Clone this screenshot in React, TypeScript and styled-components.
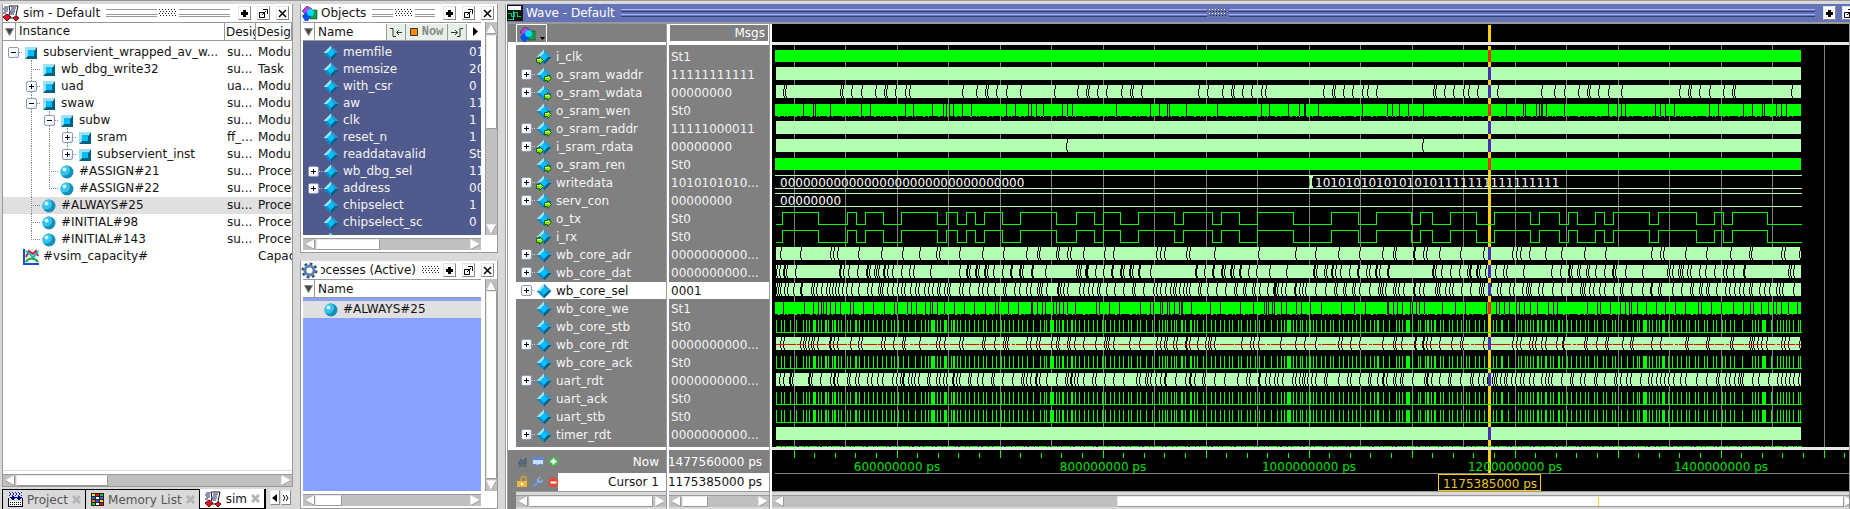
import React from "react";
import styled, { createGlobalStyle, css } from "styled-components";

const GlobalStyle = createGlobalStyle`
  * { box-sizing: border-box; }
  body { margin: 0; background: #d9d9d9; overflow: hidden; }
  body, button { font: 12px/16px "DejaVu Sans", sans-serif; color: #141414; }
  button { margin: 0; padding: 0; border: 0; background: none; }
  ul { list-style: none; margin: 0; padding: 0; }
  svg { display: block; flex: none; }
`;

/* ---------- shell ---------- */

const Window = styled.main`
  display: flex;
  gap: 7px;
  min-height: 100vh;
  padding: 3px 0 0 2px;
  border-top: 1px solid #999;
  background: #d9d9d9;
`;

const SideColumn = styled.div<{ $width: number }>`
  display: flex;
  flex-direction: column;
  flex: none;
  width: ${(p) => p.$width}px;
`;

const Panel = styled.section<{ $grow?: boolean; $height?: number }>`
  display: flex;
  flex-direction: column;
  flex: ${(p) => (p.$grow ? "1" : "none")};
  ${(p) => p.$height && css`height: ${p.$height}px;`}
  min-height: 0;
  overflow: hidden;
  background: #fff;
  border: 1px solid #999;
  border-top: 0;
`;

const TitleBar = styled.header<{ $dark?: boolean }>`
  display: flex;
  align-items: center;
  flex: none;
  gap: 4px;
  height: 18px;
  padding-right: ${(p) => (p.$dark ? 0 : 3)}px;
  margin-right: ${(p) => (p.$dark ? -5 : 0)}px;
  background: ${(p) => (p.$dark ? "#6473b5" : "#fff")};
  color: ${(p) => (p.$dark ? "#fff" : "#141414")};
`;

const Title = styled.h2<{ $clip?: boolean }>`
  margin: 0 0 0 -1px;
  font: inherit;
  white-space: nowrap;
  ${(p) =>
    p.$clip &&
    css`
      display: flex;
      justify-content: flex-end;
      width: 95px;
      overflow: hidden;
    `}
`;

const Grip = styled.div`
  display: flex;
  align-items: center;
  flex: 1;
  gap: 2px;
  min-width: 0;
  margin: 0 2px;
`;

const GripLines = styled.i<{ $dark?: boolean }>`
  flex: 1;
  height: 8px;
  border: solid ${(p) => (p.$dark ? "#a5b3ff" : "#999")};
  border-width: 1px 0;
  background: linear-gradient(
    transparent 4px,
    ${(p) => (p.$dark ? "#a5b3ff" : "#999")} 4px,
    ${(p) => (p.$dark ? "#a5b3ff" : "#999")} 5px,
    transparent 5px
  );
  ${(p) =>
    p.$dark &&
    css`
      border-bottom-color: #333f70;
      background: linear-gradient(transparent 1px, #333f70 1px, #333f70 2px, transparent 2px, transparent 4px, #a5b3ff 4px, #a5b3ff 5px, transparent 5px);
    `}
`;

const ToolButton = styled.button`
  display: grid;
  place-items: center;
  flex: none;
  width: 13px;
  height: 14px;
  margin-left: 2px;
  background: #fff;
  border: 1px solid #e4e4e4;
  border-right-color: #888;
  border-bottom-color: #888;
`;

function GripDots({ dark }: { dark?: boolean }) {
  const dots = [];
  for (let r = 0; r < 4; r++)
    for (let c = 0; c < 6; c++)
      dots.push(<rect key={`${r}-${c}`} x={c * 3 + (r % 2)} y={r * 2} width="1" height="1" fill={dark && r % 2 === 0 ? "#fff" : "#222"} />);
  return <svg width="18" height="8" shapeRendering="crispEdges">{dots}</svg>;
}

function TitleControls({ dark }: { dark?: boolean }) {
  return (
    <>
      <ToolButton aria-label="Zoom">
        <svg width="9" height="9" shapeRendering="crispEdges"><path d="M1 3h2V1h3v2h2v3H6v2H3V6H1z" fill="#000" /></svg>
      </ToolButton>
      <ToolButton aria-label="Undock">
        <svg width="9" height="9" fill="none" stroke="#000"><path d="M.5 3.500h5v5h-5zM3 6l4-4M4 .5h4.500V5" /></svg>
      </ToolButton>
      {!dark && (
        <ToolButton aria-label="Close">
          <svg width="9" height="9" stroke="#000" strokeWidth="1.500"><path d="M1 1l7 7M8 1L1 8" /></svg>
        </ToolButton>
      )}
    </>
  );
}

/* ---------- scroll bars ---------- */

const Track = styled.div<{ $vertical?: boolean; $parts: [number, number, number] }>`
  display: grid;
  flex: none;
  ${(p) => (p.$vertical ? "grid-template-rows" : "grid-template-columns")}:
    12px ${(p) => p.$parts.map((n) => `${n}fr`).join(" ")} 12px;
  ${(p) => (p.$vertical ? "width" : "height")}: 12px;
  background: #c0c0c0;
  border: 0 solid #999;
  ${(p) => (p.$vertical ? "border-left-width" : "border-top-width")}: 1px;
`;

const Thumb = styled.i`
  background: #fff;
  border: 1px solid #e8e8e8;
  border-right-color: #999;
  border-bottom-color: #999;
`;

const Arrow = styled.button`
  display: grid;
  place-items: center;
  overflow: hidden;
`;

const arrowPaths = {
  left: ["M10.500.5L1 5.500 10.500 10.500z", "M1 5.500L10.500 10.500V.5"],
  right: ["M.5.5L10 5.500.5 10.500z", "M.5 10.500L10 5.500"],
  up: ["M5.500 1L10.500 10.500H.5z", "M5.500 1L10.500 10.500H.5"],
  down: ["M.5.5h10L5.500 10z", "M10.500.5L5.500 10"],
};

function ArrowIcon({ dir }: { dir: keyof typeof arrowPaths }) {
  const [body, shade] = arrowPaths[dir];
  return (
    <svg width="11" height="11">
      <path d={body} fill="#fff" stroke="#e8e8e8" />
      <path d={shade} fill="none" stroke="#999" />
    </svg>
  );
}

function ScrollBar({ vertical, parts }: { vertical?: boolean; parts: [number, number, number] }) {
  return (
    <Track $vertical={vertical} $parts={parts}>
      <Arrow aria-label="Scroll back"><ArrowIcon dir={vertical ? "up" : "left"} /></Arrow>
      <span />
      <Thumb />
      <span />
      <Arrow aria-label="Scroll forward"><ArrowIcon dir={vertical ? "down" : "right"} /></Arrow>
    </Track>
  );
}

/* ---------- icons ---------- */

const CubeIcon = () => (
  <svg width="12" height="12">
    <path d="M0 0h12L8 4H3v5L0 12z" fill="#9fe0f7" />
    <path d="M12 0v12H0l3-3h6V4z" fill="#006080" />
    <path d="M3 3h6v6H3z" fill="#00bfff" />
  </svg>
);

const BallIcon = () => (
  <svg width="14" height="14">
    <circle cx="7" cy="7" r="6.500" fill="#1590b8" />
    <path d="M7 .5A6.500 6.500 0 0 0 1.500 10.500C4 11 10 10 10 5 10 3 9 1 7 .5z" fill="#35c4ee" />
    <circle cx="4.500" cy="4.500" r="2" fill="#d8f6ff" />
  </svg>
);

const GraphIcon = () => (
  <svg width="16" height="16" fill="none">
    <path d="M1 0v15h15" stroke="#1550c8" strokeWidth="2" />
    <path d="M2 0h14v14H2z" fill="#dff6fb" />
    <path d="M3 8l3-6 4 3 3-3 2 5" stroke="#e02020" strokeWidth="2" />
    <path d="M3 2l5 4 2 3 5-7" stroke="#10b8d8" strokeWidth="2" />
    <path d="M3 13c2-4 8-5 12 0" stroke="#30a030" strokeWidth="2" />
  </svg>
);

type Port = "in" | "out" | undefined;
const Diamond = ({ port }: { port?: Port }) => (
  <svg width="17" height="16">
    <path d="M8 .5L.5 8H5l3-3z" fill="#9ae4fa" />
    <path d="M8 .5L15.500 8H11L8 5z" fill="#2b9ad0" />
    <path d="M.5 8L8 15.500V11L5 8z" fill="#1488c4" />
    <path d="M15.500 8L8 15.500V11l3-3z" fill="#005f86" />
    <path d="M8 4L12 8 8 12 4 8z" fill="#00c0ff" />
    {port && (
      <path
        d="M.5 9.500h3V7.500l4 4-4 4v-2h-3z"
        transform={port === "out" ? "translate(8 0)" : undefined}
        fill="#86ea00"
        stroke="#17641c"
      />
    )}
    {port && <path d={port === "in" ? "M1 10.500h4" : "M9 10.500h4"} stroke="#f4ffb0" />}
  </svg>
);

const SimIcon = () => (
  <svg width="17" height="16">
    <path d="M6 1h9l-2 9 1 3H5l2-6z" fill="#fff" stroke="#111" />
    <path d="M1 2h4M0 4h5M1 6h4M0 8h3M8 3h5M8 5h4M7 7h5M7 9h4" stroke="#22226a" />
    <path d="M4 9l4 3-4 4-4-4z" fill="#e0102a" stroke="#600" />
    <path d="M13 11l3 2-3 3-3-3z" fill="#e0102a" stroke="#600" />
  </svg>
);

const ShapesIcon = () => (
  <svg width="17" height="15">
    <path d="M1 5l5-5 5 3-2 5H4z" fill="#c040e8" stroke="#202020" strokeWidth=".6" />
    <path d="M9 4h7v9h-7z" fill="#10a050" stroke="#084018" strokeWidth=".6" />
    <path d="M1 10l4-4 5 4-3 5H4z" fill="#0850e8" />
    <circle cx="9.500" cy="6.500" r="3.500" fill="#00d8f8" />
  </svg>
);

const GearIcon = () => (
  <svg width="17" height="17" viewBox="0 0 17 17" fill="none">
    <circle cx="8.500" cy="8.500" r="6.800" stroke="#2c4c74" strokeWidth="2.400" strokeDasharray="2.700 2.640" />
    <circle cx="8.500" cy="8.500" r="4.500" stroke="#5c83ad" strokeWidth="3" />
  </svg>
);

const WaveIcon = () => (
  <svg width="16" height="16" shapeRendering="crispEdges">
    <path d="M0 0h16v16H0z" fill="#111" />
    <path d="M1 1h13v4H1z" fill="#fff" />
    <path d="M1 8h3v3h3V7h3v4h4M1 14h5v-3" stroke="#00d040" fill="none" />
    <path d="M6 6v9" stroke="#00d0e0" />
  </svg>
);

/* ---------- column headings ---------- */

const HeadCell = styled.th`
  height: 18px;
  padding: 0 0 0 1px;
  overflow: hidden;
  font-weight: normal;
  text-align: left;
  white-space: nowrap;
  border-right: 1px solid #999;
  border-bottom: 1px solid #999;
`;

const HeadRow = styled.div`
  display: flex;
  align-items: center;
  flex: none;
  height: 19px;
  border-top: 1px solid #999;
  border-bottom: 1px solid #999;
`;

const FilterButton = styled.button`
  display: inline-grid;
  place-items: center;
  width: 12px;
  height: 17px;
  margin-right: 3px;
  vertical-align: top;
  border-right: 1px solid #999;
`;

const Filter = () => (
  <FilterButton aria-label="Column filter">
    <svg width="9" height="8"><path d="M.5.5h8l-4 7z" fill="#444" stroke="#888" /></svg>
  </FilterButton>
);

/* ---------- instance tree ---------- */

const TreeArea = styled.div`
  flex: 1;
  border-top: 1px solid #999;
  border-bottom: 1px solid #ddd;
  margin-bottom: 3px;
`;

const TreeTable = styled.table`
  width: 100%;
  table-layout: fixed;
  border-collapse: separate;
  border-spacing: 0;
  thead + tbody::before { content: ""; display: block; height: 3px; }
`;

const TreeRow = styled.tr<{ $selected?: boolean }>`
  background: ${(p) => (p.$selected ? "#e0e0e0" : "transparent")};
  td { height: 17px; padding: 0 0 0 2px; overflow: hidden; white-space: nowrap; line-height: 17px; }
  td:first-child { padding: 0; }
`;

const Node = styled.div`
  display: flex;
  align-items: center;
  height: 17px;
  padding-left: 1px;
`;

const Slot = styled.span`
  display: grid;
  place-items: center;
  flex: none;
  width: 18px;
  height: 17px;
  > * { grid-area: 1 / 1; }
`;

const NodeLabel = styled.span`
  margin-left: 3px;
`;

const Toggle = styled.button`
  display: grid;
  place-items: center;
  width: 11px;
  height: 11px;
  background: linear-gradient(135deg, #fff 50%, #dde2f0);
  border: 1px solid #8c9ab8;
  border-radius: 2px;
`;

const ToggleMark = ({ open }: { open?: boolean }) => (
  <svg width="7" height="7" shapeRendering="crispEdges">
    <path d={open ? "M1 3h5v1H1z" : "M1 3h5v1H1zM3 1h1v5H3z"} fill="#000" />
  </svg>
);

type Guide = { up?: boolean; down?: boolean; right?: boolean; light?: boolean };
function GuideLines({ up, down, right, light }: Guide) {
  return (
    <svg width="18" height="17" stroke={light ? "#d0d0d0" : "#888"} strokeDasharray="1 1" shapeRendering="crispEdges">
      {up && <path d="M9.500 0v9" />}
      {down && <path d="M9.500 8v9" />}
      {right && <path d="M9 8.500h9" />}
    </svg>
  );
}

type Inst = {
  name: string; unit: string; kind: string; icon: "cube" | "ball" | "graph";
  level: number; rails?: number[]; toggle?: "open" | "closed"; last?: boolean; selected?: boolean;
};

const instances: Inst[] = [
  { name: "subservient_wrapped_av_w...", unit: "su...", kind: "Module", icon: "cube", level: 0, toggle: "open" },
  { name: "wb_dbg_write32", unit: "su...", kind: "Task", icon: "cube", level: 1 },
  { name: "uad", unit: "ua...", kind: "Module", icon: "cube", level: 1, toggle: "closed" },
  { name: "swaw", unit: "su...", kind: "Module", icon: "cube", level: 1, toggle: "open" },
  { name: "subw", unit: "su...", kind: "Module", icon: "cube", level: 2, rails: [1], toggle: "open" },
  { name: "sram", unit: "ff_...", kind: "Module", icon: "cube", level: 3, rails: [1, 2], toggle: "closed" },
  { name: "subservient_inst", unit: "su...", kind: "Module", icon: "cube", level: 3, rails: [1, 2], toggle: "closed", last: true },
  { name: "#ASSIGN#21", unit: "su...", kind: "Process", icon: "ball", level: 2, rails: [1] },
  { name: "#ASSIGN#22", unit: "su...", kind: "Process", icon: "ball", level: 2, rails: [1], last: true },
  { name: "#ALWAYS#25", unit: "su...", kind: "Process", icon: "ball", level: 1, selected: true },
  { name: "#INITIAL#98", unit: "su...", kind: "Process", icon: "ball", level: 1 },
  { name: "#INITIAL#143", unit: "su...", kind: "Process", icon: "ball", level: 1, last: true },
  { name: "#vsim_capacity#", unit: "", kind: "Capacity", icon: "graph", level: 0 },
];

const instanceIcons = { cube: <CubeIcon />, ball: <BallIcon />, graph: <GraphIcon /> };

function InstanceRow({ item }: { item: Inst }) {
  const { level, rails = [], toggle, last, icon } = item;
  return (
    <TreeRow $selected={item.selected}>
      <td>
        <Node>
          {Array.from({ length: level }, (_, i) => (
            <Slot key={i}>{rails.includes(i) && <GuideLines up down />}</Slot>
          ))}
          <Slot>
            <GuideLines up={level > 0} down={level > 0 && !last} right={icon !== "graph"} />
            {toggle && <Toggle aria-label={`Toggle ${item.name}`}><ToggleMark open={toggle === "open"} /></Toggle>}
          </Slot>
          <Slot>
            <GuideLines down={toggle === "open"} />
            {instanceIcons[icon]}
          </Slot>
          <NodeLabel>{item.name}</NodeLabel>
        </Node>
      </td>
      <td>{item.unit}</td>
      <td>{item.kind}</td>
    </TreeRow>
  );
}

/* ---------- tabs ---------- */

const TabStrip = styled.nav`
  display: flex;
  flex: none;
  height: 20px;
  margin-top: 2px;
`;

const Tab = styled.button<{ $active?: boolean }>`
  display: flex;
  align-items: center;
  gap: 4px;
  padding: 0 4px 0 5px;
  white-space: nowrap;
  background: ${(p) => (p.$active ? "#fff" : "#d9d9d9")};
  color: ${(p) => (p.$active ? "#141414" : "#555")};
  border: solid #000;
  border-width: ${(p) => (p.$active ? "0 2px 1px 1px" : "1px 0 0 1px")};
`;

const TabNavs = styled.div`
  display: flex;
  gap: 1px;
  padding: 1px 0 0 4px;
`;

const TabNav = styled.button`
  display: grid;
  place-items: center;
  width: 10px;
  height: 15px;
  background: #fff;
  border: 1px solid #eee;
  border-right-color: #888;
  border-bottom-color: #888;
`;

const CloseMark = () => (
  <svg width="9" height="9" stroke="#b4b4b4" strokeWidth="3"><path d="M1 1l7 7M8 1L1 8" /></svg>
);

const ProjectIcon = () => (
  <svg width="15" height="15" shapeRendering="crispEdges">
    <path d="M1 .5h13M2 2.500h11" stroke="#2020a0" strokeDasharray="1 2" />
    <path d="M2 1.500h12M1 3.500h13" stroke="#2020a0" strokeDasharray="1 2" />
    <path d="M4 4h2v1h2L5 9 1 5h3zM10 4h2v1h2l-3 4-4-4h3z" fill="#000090" />
    <path d="M.5 6v8.500h14V6" fill="none" stroke="#000" />
    <path d="M1 9h13v5H1z" fill="#fff" />
    <path d="M2 10.500h12M2 12.500h12" stroke="#000" strokeDasharray="1 1" />
  </svg>
);

const MemoryIcon = () => {
  const colors = ["#ffe000", "#f01010", "#20c020", "#3060f0", "#fff", "#3060f0", "#ff8000", "#3060f0", "#ffe000", "#20c020", "#fff", "#f01010"];
  return (
    <svg width="13" height="13" shapeRendering="crispEdges">
      <path d="M0 0h13v13H0z" fill="#222" />
      {colors.map((c, i) => <rect key={i} x={1 + (i % 3) * 4} y={1 + Math.floor(i / 3) * 3} width="3" height="2" fill={c} />)}
    </svg>
  );
};

function SimPanel() {
  return (
    <SideColumn $width={291}>
      <Panel $grow>
        <TitleBar>
          <SimIcon />
          <Title>sim - Default</Title>
          <Grip><GripLines /><GripDots /><GripLines /></Grip>
          <TitleControls />
        </TitleBar>
        <TreeArea>
          <TreeTable>
            <colgroup><col /><col style={{ width: 31 }} /><col style={{ width: 36 }} /></colgroup>
            <thead>
              <tr>
                <HeadCell scope="col"><Filter />Instance</HeadCell>
                <HeadCell scope="col">Desig</HeadCell>
                <HeadCell scope="col">Desig</HeadCell>
              </tr>
            </thead>
            <tbody>{instances.map((it) => <InstanceRow key={it.name} item={it} />)}</tbody>
          </TreeTable>
        </TreeArea>
        <ScrollBar parts={[1, 92, 172]} />
      </Panel>
      <TabStrip>
        <Tab><ProjectIcon />Project<CloseMark /></Tab>
        <Tab><MemoryIcon />Memory List<CloseMark /></Tab>
        <Tab $active><SimIcon />sim<CloseMark /></Tab>
        <TabNavs>
          <TabNav aria-label="Previous tab"><svg width="5" height="8"><path d="M5 0v8L0 4z" /></svg></TabNav>
          <TabNav aria-label="Next tab"><svg width="6" height="8" fill="none" stroke="#000"><path d="M0 1l2 3-2 3M3 1l2 3-2 3" /></svg></TabNav>
        </TabNavs>
      </TabStrip>
    </SideColumn>
  );
}

/* ---------- objects and processes ---------- */

const ListBody = styled.div`
  display: flex;
  flex: 1;
  gap: 4px;
  min-height: 0;
  padding-left: 2px;
`;

const ListMain = styled.div`
  display: flex;
  flex-direction: column;
  flex: 1;
  min-width: 0;
`;

const ListFooter = styled.div`
  flex: none;
  padding: 3px 16px 2px 2px;
`;

const ListTable = styled.table<{ $tone: string; $color: string }>`
  display: block;
  flex: 1;
  min-height: 0;
  overflow: hidden;
  border-spacing: 0;
  padding-top: 3px;
  background: ${(p) => p.$tone};
  color: ${(p) => p.$color};
  tr { height: 17px; }
  td { padding: 0; white-space: nowrap; line-height: 17px; }
  td:first-child { min-width: 166px; }
`;

const ListNode = styled.div`
  display: flex;
  align-items: center;
  height: 17px;
  padding-left: 1px;
`;

const SelectedRow = styled.tr`
  background: #e0e0e0;
`;

const TimeTools = styled.div`
  display: flex;
  gap: 1px;
  margin-left: auto;
  height: 16px;
  background: #999;
  border: solid #999;
  border-width: 0 1px;
`;

const TimeButton = styled.button<{ $width: number }>`
  display: flex;
  align-items: center;
  justify-content: center;
  gap: 4px;
  width: ${(p) => p.$width}px;
  background: #e6f0e6;
  color: #888;
  font: bold 12px/16px "Liberation Mono", monospace;
`;

const MoreButton = styled.button`
  width: 13px;
  margin-left: 1px;
  display: grid;
  place-items: center end;
  padding-right: 3px;
`;

const objects: [string, string, boolean?][] = [
  ["memfile", "01"], ["memsize", "20"], ["with_csr", "0"], ["aw", "11"], ["clk", "1"], ["reset_n", "1"],
  ["readdatavalid", "St"], ["wb_dbg_sel", "11", true], ["address", "00", true], ["chipselect", "1"], ["chipselect_sc", "0"],
];

function ObjectsPanel() {
  return (
    <Panel $height={249}>
      <TitleBar>
        <ShapesIcon />
        <Title>Objects</Title>
        <Grip><GripLines /><GripDots /><GripLines /></Grip>
        <TitleControls />
      </TitleBar>
      <ListBody>
        <ListMain>
          <HeadRow>
            <Filter />Name
            <TimeTools>
              <TimeButton $width={18} aria-label="Previous event">
                <svg width="13" height="10" fill="none" stroke="#333"><path d="M0 1.500h3v8h3M12 5.500H7M9 3L6.500 5.500 9 8" /></svg>
              </TimeButton>
              <TimeButton $width={41}>
                <svg width="8" height="8"><path d="M.5.5h7v7h-7z" fill="#ff8c00" stroke="#333" /></svg>
                Now
              </TimeButton>
              <TimeButton $width={18} aria-label="Next event">
                <svg width="13" height="10" fill="none" stroke="#333"><path d="M12 1.500H9v8H6M0 5.500h6M4 3l2.500 2.500L4 8" /></svg>
              </TimeButton>
            </TimeTools>
            <MoreButton aria-label="More"><svg width="5" height="9"><path d="M0 0v9l5-4.500z" /></svg></MoreButton>
          </HeadRow>
          <ListTable $tone="#505a8c" $color="#f4f4f4">
            <tbody>
              {objects.map(([name, value, bus]) => (
                <tr key={name}>
                  <td>
                    <ListNode>
                      <Slot>
                        {bus && <GuideLines right light />}
                        {bus && <Toggle aria-label={`Expand ${name}`}><ToggleMark /></Toggle>}
                      </Slot>
                      <Slot><Diamond /></Slot>
                      <NodeLabel>{name}</NodeLabel>
                    </ListNode>
                  </td>
                  <td>{value}</td>
                </tr>
              ))}
              <tr><td><ListNode><Slot /><Slot><Diamond /></Slot></ListNode></td></tr>
            </tbody>
          </ListTable>
        </ListMain>
        <ScrollBar vertical parts={[1, 94, 94]} />
      </ListBody>
      <ListFooter><ScrollBar parts={[1, 64, 88]} /></ListFooter>
    </Panel>
  );
}

const ProcessTable = styled(ListTable)`
  tbody { display: block; }
  tr { display: block; }
  td { display: block; }
`;

function ProcessesPanel() {
  return (
    <Panel $grow>
      <TitleBar>
        <GearIcon />
        <Title $clip><span>Processes (Active)</span></Title>
        <Grip><GripDots /></Grip>
        <TitleControls />
      </TitleBar>
      <ListBody>
        <ListMain>
          <HeadRow><Filter />Name</HeadRow>
          <ProcessTable $tone="#8aa2ff" $color="#141414">
            <tbody>
              <SelectedRow>
                <td>
                  <ListNode>
                    <Slot /><Slot><BallIcon /></Slot><NodeLabel>#ALWAYS#25</NodeLabel>
                  </ListNode>
                </td>
              </SelectedRow>
            </tbody>
          </ProcessTable>
        </ListMain>
        <ScrollBar vertical parts={[0, 1, 0]} />
      </ListBody>
      <ListFooter><ScrollBar parts={[0, 27, 126]} /></ListFooter>
    </Panel>
  );
}

/* ---------- wave data ---------- */

const nums = (s: string) => s.trim().split(/\s+/).map(Number);

const WDATA = nums(`11 13 68 70 79 89 103 112 114 123 133 137 190 204 213 215 224 234 248 282 305 314 316 325 334 349 358 360 369
 426 435 450 459 461 470 479 489 493 551 560 562 571 580 590 595 604 661 663 672 681 691 696 705 717 725 769 782 792 806 815 817 826 836 849
 907 916 918 927 937 951 960 962 1019`);
const WEN = nums(`31 41 43 58 89 98 133 141 160 171 174 177 181 190 199 234 243 256 259 264 271 290 295 300 344 378 387 395 397 414 445
 489 497 516 527 532 533 546 590 615 620 627 636 651 734 751 753 764 767 769 770 774 792 836 845 849 853 883 888 893 902 937 946 971 980 990 992
 1004 1009 1014`);
const RDATA = [294, 650];
const UART = nums(`10 46 75 84 93 111 129 165 174 185 194 203 212 230 248 284 304 322 331 348 366 402 411 440 449 467 485 521 559 586
 604 639 648 660 678 704 722 758 767 787 796 805 823 832 841 877 886 924 942 951 960 995`);
const ADR = nums(`8 28 58 61 65 86 109 130 147 164 167 187 210 231 254 265 267 284 286 295 298 311 332 341 384 388 392 414 417 442 486
 523 543 566 587 610 621 623 641 642 651 654 667 688 711 740 744 748 757 773 789 812 833 879 888 891 913 934 958 977 979 1009 1012 1027`);
const DAT = nums(`4 7 11 12 14 23 67 68 71 76 85 94 95 97 102 104 106 111 112 115 120 129 137 141 158 187 194 195 197 203 204 206 212 213
 215 221 230 238 239 247 248 250 259 260 273 304 306 308 313 314 315 323 331 339 340 348 349 351 357 358 360 366 367 378 423 424 432 440 441 449 450
 452 458 459 461 467 468 476 484 497 514 541 542 544 552 554 559 560 563 568 577 585 586 594 597 603 604 607 615 616 660 661 663 669 678 687 695 697
 698 704 705 707 713 723 731 734 751 779 788 796 797 799 805 807 814 816 823 832 840 841 843 853 870 895 897 900 906 908 910 915 918 927 933 942 951
 954 961 971 972 1016 1018 1021`);
const SEL = nums(`4 6 8 12 15 21 28 29 39 41 44 49 54 57 60 63 66 70 74 79 86 95 99 106 108 110 115 120 125 129 132 138 143 146 152 156 160
 165 167 172 175 177 187 190 197 206 210 215 222 231 233 242 247 254 258 265 267 269 274 285 286 288 291 295 307 311 316 320 325 327 334 342 351 360
 362 371 381 384 388 393 398 401 403 407 411 414 417 426 428 435 444 453 462 464 471 473 480 482 487 495 501 502 503 505 509 513 522 523 527 530 533
 543 553 562 564 571 573 580 582 587 597 606 608 610 613 621 623 626 631 641 642 647 651 663 665 667 673 677 680 689 698 707 709 711 718 725 728 737
 741 750 754 756 758 766 770 780 789 799 808 810 812 817 821 827 832 841 848 850 859 870 878 879 886 888 900 909 918 920 927 929 934 936 944 953 957
 962 967 971 977 979 987 992 997 1004 1007 1010 1021`);
const WE = nums(`11 32 41 46 49 51 54 58 63 68 78 81 91 101 112 122 125 135 139 144 153 158 160 165 172 182 192 202 213 223 226 236 246 259
 260 265 270 273 281 284 287 291 295 303 324 327 337 347 368 378 381 388 390 395 397 402 407 409 410 419 438 448 468 481 492 494 496 500 502 509 514
 524 529 538 549 569 582 593 615 616 621 625 630 638 640 644 647 652 670 683 693 714 724 727 732 737 744 747 752 758 765 776 781 785 815 825 828 838
 848 853 857 859 865 874 884 893 903 913 926 929 939 949 961 971 978 981 989 996 1001 1004 1009 1016 1025`);
const STB = nums(`4 9 12 18 24 31 34 37 41 42 43 46 49 53 54 56 60 62 63 66 69 75 78 83 84 87 92 96 101 105 110 114 119 122 126 131 136 143 149
 153 156 159 160 161 162 165 168 172 173 174 179 181 182 185 188 193 197 202 206 211 214 220 224 229 232 237 241 246 250 255 261 268 272 274 278 279
 280 281 284 287 290 291 295 299 300 303 307 312 316 321 325 330 333 338 342 347 351 356 359 365 368 374 380 387 390 393 395 399 402 404 409 410 413
 418 419 422 425 431 434 439 443 448 452 457 460 466 469 475 478 483 487 492 499 505 509 512 515 516 517 518 521 524 528 530 534 537 538 541 544 549
 553 558 561 567 571 576 580 584 588 593 598 602 605 606 611 617 624 627 630 634 635 636 637 640 646 648 653 655 656 659 662 663 668 671 677 680 685
 689 694 697 703 707 712 721 724 729 730 736 746 749 753 755 758 761 765 766 769 773 774 778 781 786 787 790 795 799 804 808 813 816 822 825 831 834
 840 843 849 855 861 865 867 871 872 873 874 877 880 884 887 890 891 892 896 900 905 909 914 917 923 926 932 935 941 944 950 953 958 962 970 980 983
 986 990 991 992 993 999 1005 1008 1011 1014 1017 1021 1026 1028`);
const RDT = nums(`8 11 28 31 33 36 39 41 45 57 58 61 65 78 86 89 109 112 121 130 132 147 164 167 172 187 190 210 212 222 231 233 235 254 258
 264 267 279 284 286 295 297 302 311 323 332 334 336 341 357 367 384 388 392 394 401 404 413 414 417 425 433 436 438 442 469 478 481 486 508 523 532
 543 566 569 578 587 610 621 623 629 642 643 650 651 654 658 667 679 688 690 711 740 744 748 757 760 763 769 773 784 790 791 812 814 824 833 835 850
 858 860 879 888 913 915 934 936 958 960 977 979 981 985 989 994 1009 1012 1016 1027`);
const URDT = nums(`7 11 17 18 20 36 37 39 48 58 61 62 65 75 77 83 86 95 99 105 110 120 124 128 130 131 136 139 142 146 155 157 164 167 171 174
 180 181 184 187 196 198 205 210 219 221 230 240 249 251 254 258 263 264 267 274 284 293 295 298 299 302 305 311 320 323 332 341 351 364 367 373 375
 378 383 388 392 393 403 413 417 418 422 430 432 442 452 465 474 477 486 487 493 497 502 505 510 520 523 527 530 532 535 539 543 552 554 566 575 578
 587 596 598 605 610 611 614 621 623 628 630 640 652 654 655 659 667 676 678 688 698 700 706 711 715 720 722 724 728 732 734 739 743 748 751 757 761
 769 773 776 779 789 798 800 808 812 822 824 832 842 844 848 854 858 868 876 879 884 888 892 896 901 908 913 924 934 944 946 953 957 962 966 968 970
 980 986 996 1005 1009 1013 1017 1021 1026`);

type Kind = "clock" | "bus" | "text" | "line" | "pulse";
type Signal = { name: string; value: string; kind: Kind; port?: Port; expand?: boolean; at?: number[]; mid?: boolean; selected?: boolean };

const X10 = "0000000000...";
const signals: Signal[] = [
  { name: "i_clk", value: "St1", kind: "clock", port: "in" },
  { name: "o_sram_waddr", value: "11111111111", kind: "bus", port: "out", expand: true },
  { name: "o_sram_wdata", value: "00000000", kind: "bus", port: "out", expand: true, at: WDATA },
  { name: "o_sram_wen", value: "St0", kind: "clock", port: "out", at: WEN },
  { name: "o_sram_raddr", value: "11111000011", kind: "bus", port: "out", expand: true },
  { name: "i_sram_rdata", value: "00000000", kind: "bus", port: "in", expand: true, at: RDATA },
  { name: "o_sram_ren", value: "St0", kind: "clock", port: "out" },
  { name: "writedata", value: "1010101010...", kind: "text", port: "in", expand: true, at: [538] },
  { name: "serv_con", value: "00000000", kind: "text", port: "out", expand: true },
  { name: "o_tx", value: "St0", kind: "line", port: "out", at: UART },
  { name: "i_rx", value: "St0", kind: "line", port: "in", at: UART },
  { name: "wb_core_adr", value: X10, kind: "bus", expand: true, at: ADR },
  { name: "wb_core_dat", value: X10, kind: "bus", expand: true, at: DAT },
  { name: "wb_core_sel", value: "0001", kind: "bus", expand: true, at: SEL, selected: true },
  { name: "wb_core_we", value: "St1", kind: "clock", at: WE },
  { name: "wb_core_stb", value: "St0", kind: "pulse", at: STB },
  { name: "wb_core_rdt", value: X10, kind: "bus", expand: true, at: RDT, mid: true },
  { name: "wb_core_ack", value: "St0", kind: "pulse", at: STB },
  { name: "uart_rdt", value: X10, kind: "bus", expand: true, at: URDT },
  { name: "uart_ack", value: "St0", kind: "pulse", at: STB },
  { name: "uart_stb", value: "St0", kind: "pulse", at: STB },
  { name: "timer_rdt", value: X10, kind: "bus", expand: true },
];

const END = 1029;
const CURSOR = 716;
const GREEN = "#00ff00";
const PALE = "#b4ffb4";
const GOLD = "#ffd000";

const bars = (xs: number[], y: number, h: number) => xs.map((x) => `M${x} ${y}h1v${h}h-1z`).join("");
const edges = (xs: number[], y: number) =>
  xs.map((x) => `M${x + 1} ${y}h1v4h-1zM${x} ${y + 4}h1v7h-1zM${x + 1} ${y + 11}h1v2h-1z`).join("");

function linePath(xs: number[], y: number) {
  let d = `M4 ${y + 14.5}`;
  xs.forEach((x, i) => { d += `H${x + 0.5}V${y + (i % 2 ? 14.5 : 2.5)}`; });
  return `${d}H${END + 1}`;
}

function Trace({ signal, y }: { signal: Signal; y: number }) {
  const at = signal.at ?? [];
  switch (signal.kind) {
    case "clock":
      return (
        <g>
          <rect x="3" y={y + 2} width={END - 3} height="12" fill={GREEN} />
          {at.length > 0 && <path d={bars(at, y + 2, 12)} fill="#000" />}
          {at.length > 0 && <path d={`M6 ${y + 14.5}H${END}`} stroke={GREEN} strokeDasharray="2 4 1 2 1 7 2 3 1 9" />}
          <rect x={CURSOR} y={y + 2} width="3" height="12" fill="#ff2800" />
        </g>
      );
    case "bus":
      return (
        <g>
          <rect x="4" y={y + 1} width={END - 4} height="13" fill={PALE} />
          <path d={edges(at, y + 1)} fill="#000" />
          {signal.mid && <path d={`M4 ${y + 8.5}H${END}`} stroke="#ff0000" strokeDasharray="20 1 9 2 3 1 14 1" />}
          <rect x={CURSOR} y={y + 1} width="3" height="13" fill="#4b2ab4" />
        </g>
      );
    case "text":
      return (
        <g>
          <path d={`M3 ${y + 1.5}H${END + 1}M3 ${y + 14.5}H${END + 1}`} stroke={PALE} />
          {at.map((x) => <path key={x} d={`M${x - 1} ${y + 1}h4v3h-1v8h1v3h-4v-3h1v-8h-1z`} fill={PALE} />)}
        </g>
      );
    case "line":
      return <path d={linePath(at, y)} fill="none" stroke={GREEN} />;
    case "pulse":
      return (
        <g>
          <path d={bars(at, y + 2, 12)} fill={GREEN} />
          <path d={`M4 ${y + 14.5}H${END + 1}`} stroke={GREEN} />
        </g>
      );
  }
}

/* ---------- wave window ---------- */

const WaveWindow = styled.section`
  display: flex;
  flex-direction: column;
  flex: 1;
  min-width: 0;
  overflow: hidden;
  padding-left: 1px;
  border-left: 1px solid #999;
  background: #fff;
`;

const WavePanes = styled.div`
  display: grid;
  grid-template-columns: 159px 101px minmax(0, 1fr);
  column-gap: 2px;
  flex: 1;
  border-top: 2px solid #999;
  border-left: 1px solid #999;
`;

const Pane = styled.div`
  display: flex;
  flex-direction: column;
  min-width: 0;
  border-right: 1px solid #999;
`;

const PaneHead = styled.div<{ $black?: boolean }>`
  display: flex;
  flex: none;
  height: 18px;
  background: ${(p) => (p.$black ? "#000" : "#808080")};
`;

const MsgsHead = styled.div`
  flex: 1;
  padding-right: 3px;
  border: 1px solid #fff;
  color: #fff;
  text-align: right;
`;

const ShapeMenu = styled.button`
  display: flex;
  align-items: flex-end;
  gap: 4px;
  width: 31px;
  margin-left: 8px;
  padding: 0 0 0 2px;
  border: 1px solid #fff;
  border-bottom: 0;
`;

const SignalList = styled.ul<{ $gutter?: boolean }>`
  flex: none;
  height: 405px;
  padding-top: 3px;
  overflow: hidden;
  background: #808080;
  border: solid #fff;
  border-width: 3px 0 0 ${(p) => (p.$gutter ? 8 : 0)}px;
`;

const SignalRow = styled.li<{ $selected?: boolean; $indent?: boolean }>`
  display: flex;
  align-items: center;
  height: 17px;
  margin-bottom: 1px;
  padding-left: ${(p) => (p.$indent ? 1 : 2)}px;
  white-space: nowrap;
  background: ${(p) => (p.$selected ? "#fff" : "transparent")};
  color: ${(p) => (p.$selected ? "#141414" : "#f4f4f4")};
`;

const Foot = styled.div`
  display: flex;
  flex-direction: column;
  flex: none;
  height: 44px;
  border-top: 3px solid #fff;
  background: #808080;
`;

const FootRow = styled.div<{ $light?: boolean }>`
  display: flex;
  align-items: center;
  height: ${(p) => (p.$light ? 18 : 23)}px;
  background: #808080;
  color: ${(p) => (p.$light ? "#141414" : "#fff")};
`;

const FootText = styled.span<{ $light?: boolean }>`
  display: flex;
  justify-content: flex-end;
  align-items: center;
  flex: 1;
  align-self: stretch;
  min-width: 0;
  overflow: hidden;
  padding-right: 7px;
  white-space: nowrap;
  background: ${(p) => (p.$light ? "#fff" : "transparent")};
`;

const FootTools = styled.span`
  display: flex;
  align-items: center;
  gap: 4px;
  width: 50px;
  padding-left: 9px;
  padding-right: 2px;
`;

const ScrollRow = styled.div<{ $gutter?: boolean }>`
  flex: 1;
  padding: 3px 0 2px;
  background: #d9d9d9;
  border-top: 1px solid #999;
  border-left: ${(p) => (p.$gutter ? 8 : 0)}px solid #808080;
`;

const Plot = styled.div`
  flex: none;
  overflow: hidden;
  background: #000;
  border-top: 3px solid #e8e8e8;
`;

const WaveTrack = styled.div`
  display: grid;
  grid-template-columns: 12px 333fr 727fr 5px;
  height: 12px;
  background: #c0c0c0;
  border-top: 1px solid #999;
`;

const WaveThumb = styled.div`
  display: grid;
  grid-template-columns: 482fr 1px 245fr;
  background: #fff;
  border: 1px solid #e8e8e8;
  border-right-color: #999;
  border-bottom-color: #999;
`;

const CursorMark = styled.i`
  grid-column: 2;
  background: ${GOLD};
`;

const PlotText = styled.text`
  font: 12px "DejaVu Sans", sans-serif;
`;

function WavePlot() {
  const grid = Array.from({ length: 21 }, (_, i) => Math.floor(22 + 51.5 * i));
  return (
    <svg width="1078" height="402" shapeRendering="crispEdges">
      <path d={bars(grid, 0, 402)} fill="#808080" />
      <rect x={CURSOR} y="1" width="3" height="401" fill={GOLD} />
      {signals.map((s, i) => <Trace key={s.name} signal={s} y={3 + i * 18} />)}
      <path d="M4 401.500H1030" stroke={GREEN} strokeDasharray="5 1 3 1 8 1 2 2" />
      <PlotText x="8" y="142" fill="#fff">{"0".repeat(32)}</PlotText>
      <PlotText x="543" y="142" fill="#fff">{"10".repeat(8) + "1".repeat(16)}</PlotText>
      <PlotText x="8" y="160" fill="#fff">00000000</PlotText>
    </svg>
  );
}

function Ruler() {
  const ticks = Array.from({ length: 52 }, (_, i) => i);
  return (
    <svg width="1078" height="41" shapeRendering="crispEdges">
      {ticks.map((i) => {
        const major = i % 5 === 0;
        return <rect key={i} x={Math.floor(22 + 20.6 * i)} y={major ? 0 : 3} width="1" height={major ? 8 : 5} fill={GREEN} />;
      })}
      <path d="M3 23.500H1078" stroke="#808080" />
      <rect x={CURSOR} y="0" width="3" height="23" fill={GOLD} />
      {[6, 8, 10, 12, 14].map((n, i) => (
        <PlotText key={n} x={125 + i * 206} y="21" textAnchor="middle" fill="#00e000">{`${n}00000000 ps`}</PlotText>
      ))}
      <rect x="666.500" y="24.500" width="102" height="16" fill="#000" stroke={GOLD} />
      <PlotText x="718" y="38" textAnchor="middle" fill="#e8c820">1175385000 ps</PlotText>
    </svg>
  );
}

function NowTools() {
  return (
    <FootTools>
      <svg width="11" height="12"><path d="M1 10h9M2 7l2-4 2 3 3-4v6H2z" fill="#5a6f88" stroke="#46586e" /></svg>
      <svg width="12" height="12"><path d="M.5 1.500h11v7h-5l-2 2v-2h-4z" fill="#c8dcf8" stroke="#6a8cc0" /><path d="M1 2h10v2H1z" fill="#5a88d0" /></svg>
      <svg width="11" height="11"><circle cx="5.500" cy="5.500" r="5" fill="#4cb050" /><path d="M5.500 2.500v6M2.500 5.500h6" stroke="#fff" strokeWidth="2" /></svg>
    </FootTools>
  );
}

function CursorTools() {
  return (
    <FootTools>
      <svg width="11" height="12"><path d="M4 5V3a2.500 2.500 0 0 1 5 0v2" fill="none" stroke="#d8a030" strokeWidth="1.500" /><path d="M0 5h10v6H0z" fill="#f0b840" /><path d="M4 7h2v2H4z" fill="#fff" /></svg>
      <svg width="12" height="12"><path d="M1.500 10.500L7 5" stroke="#6a94d8" strokeWidth="3" /><path d="M11 3L8.500 5.500 6.500 3.500 9 1A3 3 0 1 0 11 3z" fill="#8ab0e8" /></svg>
      <svg width="11" height="11"><circle cx="5.500" cy="5.500" r="5" fill="#e84838" /><path d="M2.500 5.500h6" stroke="#fff" strokeWidth="2" /></svg>
    </FootTools>
  );
}

function WavePanel() {
  return (
    <WaveWindow>
      <TitleBar $dark>
        <WaveIcon />
        <Title>Wave - Default</Title>
        <Grip><GripLines $dark /><GripDots dark /><GripLines $dark /></Grip>
        <TitleControls dark />
      </TitleBar>
      <WavePanes>
        <Pane>
          <PaneHead>
            <ShapeMenu aria-label="Signal filter">
              <ShapesIcon />
              <svg width="5" height="5"><path d="M0 0h5L2.500 3z" /></svg>
            </ShapeMenu>
          </PaneHead>
          <SignalList $gutter>
            {signals.map((s) => (
              <SignalRow key={s.name} $selected={s.selected} $indent>
                <Slot>
                  {s.expand && <GuideLines right light />}
                  {s.expand && <Toggle aria-label={`Expand ${s.name}`}><ToggleMark /></Toggle>}
                </Slot>
                <Slot><Diamond port={s.port} /></Slot>
                <NodeLabel>{s.name}</NodeLabel>
              </SignalRow>
            ))}
          </SignalList>
          <Foot>
            <FootRow><NowTools /><FootText>Now</FootText></FootRow>
            <FootRow $light><CursorTools /><FootText $light>Cursor 1</FootText></FootRow>
          </Foot>
          <ScrollRow $gutter><ScrollBar parts={[1, 124, 1]} /></ScrollRow>
        </Pane>
        <Pane>
          <PaneHead><MsgsHead>Msgs</MsgsHead></PaneHead>
          <SignalList>
            {signals.map((s) => <SignalRow key={s.name} $selected={s.selected}>{s.value}</SignalRow>)}
          </SignalList>
          <Foot>
            <FootRow><FootText>1477560000 ps</FootText></FootRow>
            <FootRow $light><FootText $light>1175385000 ps</FootText></FootRow>
          </Foot>
          <ScrollRow><ScrollBar parts={[1, 26, 49]} /></ScrollRow>
        </Pane>
        <Pane>
          <PaneHead $black>
            <svg width="1078" height="18"><rect x={CURSOR} y="1" width="3" height="17" fill={GOLD} /></svg>
          </PaneHead>
          <Plot><WavePlot /></Plot>
          <Plot><Ruler /></Plot>
          <ScrollRow>
            <WaveTrack>
              <Arrow aria-label="Scroll left"><ArrowIcon dir="left" /></Arrow>
              <span />
              <WaveThumb><CursorMark /></WaveThumb>
              <Arrow aria-label="Scroll right"><ArrowIcon dir="right" /></Arrow>
            </WaveTrack>
          </ScrollRow>
        </Pane>
      </WavePanes>
    </WaveWindow>
  );
}

const Stack = styled(SideColumn)`
  gap: 8px;
`;

export default function App() {
  return (
    <>
      <GlobalStyle />
      <Window>
        <SimPanel />
        <Stack $width={198}>
          <ObjectsPanel />
          <ProcessesPanel />
        </Stack>
        <WavePanel />
      </Window>
    </>
  );
}
